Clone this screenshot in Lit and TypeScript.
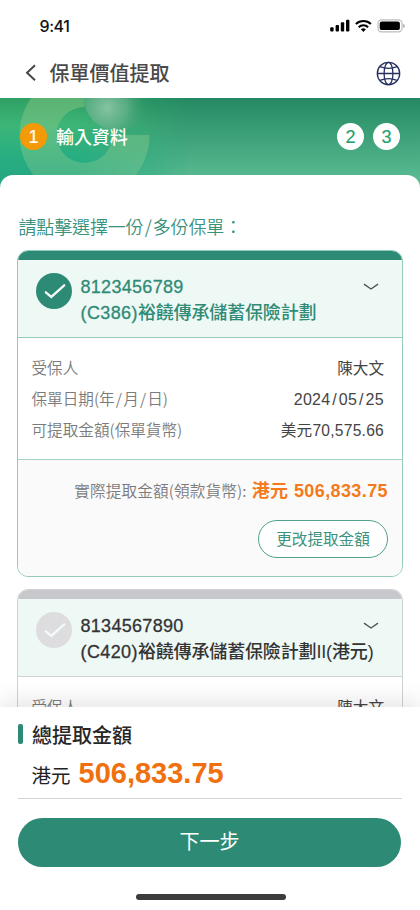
import { LitElement, html, css } from "lit";
import { customElement, property } from "lit/decorators.js";

const base = css`
  :host {
    display: block;
    box-sizing: border-box;
    font-family: "Liberation Sans", "Noto Sans CJK TC", sans-serif;
  }
  *,
  *::before,
  *::after {
    box-sizing: border-box;
  }
  svg {
    display: block;
    flex: none;
  }
`;

@customElement("status-bar")
class StatusBar extends LitElement {
  static styles = [
    base,
    css`
      .bar {
        height: 48px;
        display: flex;
        justify-content: space-between;
        align-items: flex-start;
        padding: 16px 14px 0 39.5px;
      }
      .time {
        font: 500 16px/20px Inter, sans-serif;
        letter-spacing: -0.45px;
        color: #111;
      }
      .icons {
        margin-top: 2px;
      }
    `,
  ];
  render() {
    return html`<div class="bar">
      <span class="time">9:41</span>
      <svg class="icons" width="76" height="18" viewBox="0 0 76 18">
        <g fill="#000">
          <rect x="0.2" y="9.2" width="3.4" height="4.4" rx="1" />
          <rect x="5.6" y="7" width="3.4" height="6.6" rx="1" />
          <rect x="10.8" y="4.3" width="3.4" height="9.3" rx="1" />
          <rect x="16" y="1.8" width="3.4" height="11.8" rx="1" />
          <path d="M33.4 13.9l-2.5-2.6a3.7 3.7 0 0 1 5 0z" />
        </g>
        <g fill="none" stroke="#000" stroke-width="2">
          <path d="M28.7 9.3a6.6 6.6 0 0 1 9.4 0" />
          <path d="M25.9 6a10.8 10.8 0 0 1 15 0" />
        </g>
        <rect x="48" y="1.8" width="24" height="12" rx="3.6" fill="#fff" stroke="#bdbdbd" stroke-width="1.2" />
        <path d="M73.2 6v4c1-.3 1.6-1 1.6-2s-.6-1.7-1.6-2z" fill="#aaa" />
        <rect x="49.7" y="3.5" width="20.2" height="8.6" rx="2.2" fill="#000" />
      </svg>
    </div>`;
  }
}

@customElement("nav-bar")
class NavBar extends LitElement {
  static styles = [
    base,
    css`
      .bar {
        height: 50px;
        display: flex;
        align-items: center;
        padding: 0 19px 0 25px;
      }
      .title {
        margin: 2px auto 0 13.5px;
        font-size: 20px;
        font-weight: 500;
        line-height: 30px;
        color: #4a4a4a;
      }
    `,
  ];
  render() {
    return html`<div class="bar">
      <svg width="11" height="18" viewBox="0 0 11 18" fill="none" stroke="#444" stroke-width="1.9">
        <path d="M10 1.3L2 8.7l8 7.6" />
      </svg>
      <span class="title">保單價值提取</span>
      <svg width="25" height="25" viewBox="0 0 25 25" fill="none" stroke="#26305f" stroke-width="1.3">
        <circle cx="12.5" cy="12.5" r="11.2" />
        <ellipse cx="12.5" cy="12.5" rx="4.4" ry="11.2" />
        <path d="M1.3 12.5h22.4M4 5.7c5 1.9 12 1.9 17 0M4 19.3c5-1.9 12-1.9 17 0" />
      </svg>
    </div>`;
  }
}

@customElement("step-banner")
class StepBanner extends LitElement {
  static styles = [
    base,
    css`
      :host {
        height: 96px;
        position: relative;
        overflow: hidden;
      }
      .art {
        position: absolute;
        inset: 0;
      }
      .steps {
        position: relative;
        display: flex;
        align-items: center;
        height: 77px;
        padding: 0 20px;
        gap: 9px;
      }
      .dot {
        width: 27px;
        height: 27px;
        border-radius: 50%;
        background: #fff;
        color: #24a06d;
        font-size: 18px;
        line-height: 28px;
        text-align: center;
        -webkit-text-stroke: 0.15px;
      }
      .on {
        background: #f59a07;
        color: #fff;
      }
      .label {
        margin-right: auto;
        padding-top: 2px;
        color: #fff;
        font-size: 18px;
        font-weight: 500;
        letter-spacing: -0.1px;
        line-height: 26px;
      }
    `,
  ];
  render() {
    return html`<svg class="art" width="420" height="96" viewBox="0 0 420 96">
        <defs>
          <linearGradient id="base" x1="0" y1="0" x2="0" y2="1">
            <stop offset="0" stop-color="#248963" />
            <stop offset=".8" stop-color="#56b88e" />
            <stop offset="1" stop-color="#5fbf96" />
          </linearGradient>
          <linearGradient id="left" x1="0" y1="0" x2="0" y2="1">
            <stop offset="0" stop-color="#2f9f64" />
            <stop offset=".28" stop-color="#3cb677" />
            <stop offset=".6" stop-color="#28ae81" />
            <stop offset="1" stop-color="#22a383" />
          </linearGradient>
          <linearGradient id="fade" x1="0" y1="0" x2="1" y2="0">
            <stop offset=".4" stop-color="#fff" />
            <stop offset=".65" stop-color="#fff" stop-opacity=".6" />
            <stop offset="1" stop-color="#fff" stop-opacity="0" />
          </linearGradient>
          <mask id="leftmask"><rect width="190" height="96" fill="url(#fade)" /></mask>
          <linearGradient id="ring" x1="0" y1="0" x2="0" y2="1">
            <stop offset="0" stop-color="#8cc47c" stop-opacity=".5" />
            <stop offset=".6" stop-color="#8cc98c" stop-opacity=".42" />
            <stop offset="1" stop-color="#7ccb9a" stop-opacity=".34" />
          </linearGradient>
          <radialGradient id="glow" gradientUnits="userSpaceOnUse" cx="107" cy="10" r="40">
            <stop offset="0" stop-color="#86c3a3" />
            <stop offset=".5" stop-color="#62b189" stop-opacity=".8" />
            <stop offset="1" stop-color="#3a9a70" stop-opacity="0" />
          </radialGradient>
        </defs>
        <rect width="420" height="96" fill="url(#base)" />
        <rect width="190" height="96" fill="url(#left)" mask="url(#leftmask)" />
        <path d="M84.5-28A65 65 0 1 0 149.5 37H112.5A28 28 0 1 1 84.5 9z" fill="url(#ring)" />
        <circle cx="116.5" cy="0" r="32.5" fill="url(#glow)" />
      </svg>
      <div class="steps">
        <span class="dot on">1</span>
        <span class="label">輸入資料</span>
        <span class="dot">2</span>
        <span class="dot">3</span>
      </div>`;
  }
}

@customElement("policy-card")
class PolicyCard extends LitElement {
  @property({ type: Boolean, reflect: true }) selected = false;
  @property() number = "";
  @property() code = "";
  @property() name = "";

  static styles = [
    base,
    css`
      :host {
        --line: #d0d3d3;
        --bar: #c7c8cc;
        --ink: #333;
        --tick: #dddde0;
        border: 1px solid var(--line);
        border-radius: 11px;
        overflow: hidden;
        background: #fff;
      }
      :host([selected]) {
        --line: #94cbbb;
        --bar: #2c8a75;
        --ink: #2f8b75;
        --tick: #2c8a75;
      }
      .bar {
        height: 10px;
        margin: -1px -1px 0;
        background: var(--bar);
      }
      .head {
        display: flex;
        height: 78px;
        padding: 13px 22px 0 17.5px;
        background: #eef8f5;
        border-bottom: 1px solid var(--line);
      }
      .names {
        flex: 1;
        min-width: 0;
        padding: 1px 0 0 9px;
        font-size: 18px;
        font-weight: 500;
        line-height: 26px;
        color: var(--ink);
        white-space: nowrap;
      }
      .number,
      .code {
        -webkit-text-stroke: 0.3px;
      }
      .number {
        letter-spacing: 0.3px;
      }
      .code {
        letter-spacing: 0.4px;
      }
      .name {
        letter-spacing: -0.15px;
      }
      .arrow {
        margin-top: 9px;
      }
    `,
  ];
  render() {
    return html`<div class="bar"></div>
      <div class="head">
        <svg width="36" height="36" viewBox="0 0 36 36" fill="none">
          <circle cx="18" cy="18" r="18" fill="var(--tick)" />
          <path d="M9.8 19.3l5.5 4.6L28.2 12.3" stroke="#f4fbf9" stroke-width="2.3" stroke-linecap="round" />
        </svg>
        <div class="names">
          <div class="number">${this.number}</div>
          <div class="name"><span class="code">${this.code}</span>${this.name}</div>
        </div>
        <svg class="arrow" width="18" height="10" viewBox="0 0 18 10" fill="none" stroke="#4c5755" stroke-width="1.4">
          <path d="M2 2.2l7 4.8 7-4.8" />
        </svg>
      </div>
      <slot></slot>`;
  }
}

@customElement("app-root")
class AppRoot extends LitElement {
  static styles = [
    base,
    css`
      :host {
        width: 420px;
        height: 910px;
        background: #fff;
        display: flex;
        flex-direction: column;
        overflow: hidden;
      }
      .sheet {
        position: relative;
        margin-top: -19px;
        height: 532px;
        flex: none;
        border-radius: 13px 13px 0 0;
        background: #fff;
        padding: 38px 17px 0;
        overflow: hidden;
      }
      .prompt {
        height: 26px;
        margin: 0 0 11px 1.5px;
        font-family: "Noto Sans CJK TC", sans-serif;
        font-size: 18px;
        line-height: 26px;
        font-weight: 350;
        letter-spacing: -0.15px;
        color: #3a917c;
      }
      .slash {
        padding: 0 1.2px;
      }
      policy-card {
        margin-bottom: 12px;
      }
      .rows {
        padding: 14.5px 18px 0 13.5px;
        height: 121px;
        font-size: 15.6px;
        line-height: 31.4px;
      }
      .row {
        display: flex;
        justify-content: space-between;
        height: 31.4px;
        color: #444;
      }
      .key {
        margin-top: -1px;
        color: #7b7b7b;
        font-family: "Noto Sans CJK TC", sans-serif;
        font-weight: 350;
      }
      .date {
        letter-spacing: 0.3px;
        font-size: 16px;
      }
      .date .slash {
        padding: 0 1.8px;
      }
      .usd {
        letter-spacing: 0.25px;
      }
      .foot {
        height: 117px;
        border-top: 1px solid #a5d3c6;
        background: #fafafa;
        padding: 18px 14px 0;
        display: flex;
        flex-direction: column;
        align-items: flex-end;
        gap: 16px;
      }
      .payout {
        display: flex;
        gap: 5px;
        line-height: 26px;
        white-space: nowrap;
      }
      .payout .key {
        font-size: 15.6px;
        letter-spacing: 0.15px;
      }
      .hkd {
        font-size: 18px;
        font-weight: 700;
        color: #f47a1c;
        letter-spacing: 0.4px;
      }
      .change {
        width: 130px;
        height: 38px;
        border: 1px solid #52a18e;
        border-radius: 19px;
        background: #fff;
        color: #3d937e;
        font-size: 15.6px;
        line-height: 38px;
        text-align: center;
      }
      .total {
        position: relative;
        height: 203px;
        flex: none;
        background: #fff;
        box-shadow: 0 -6px 22px rgba(0, 0, 0, 0.1);
        padding: 17px 18px 0;
      }
      .total-title {
        display: flex;
        align-items: center;
        gap: 9.5px;
        height: 20px;
        font-size: 20px;
        font-weight: 500;
        color: #262626;
      }
      .mark {
        width: 4.5px;
        height: 20px;
        border-radius: 2px;
        background: #2c8a75;
      }
      .sum {
        display: flex;
        align-items: baseline;
        gap: 8px;
        height: 54.5px;
        padding-left: 13.5px;
        line-height: 59px;
        border-bottom: 1px solid #d4d4d4;
        font-size: 19.5px;
        color: #222;
      }
      .sum b {
        font-size: 29px;
        color: #f07010;
      }
      .next {
        margin: 19.5px 1px 0 0;
        height: 49px;
        border-radius: 25px;
        background: #2c8a75;
        color: #fff;
        font-size: 20px;
        line-height: 49px;
        text-align: center;
      }
      .home {
        width: 150px;
        height: 6px;
        margin: 27px 0 0 118px;
        border-radius: 3px;
        background: #3c3c3c;
      }
    `,
  ];
  render() {
    const slash = html`<span class="slash">/</span>`;
    return html`
      <status-bar></status-bar>
      <nav-bar></nav-bar>
      <step-banner></step-banner>
      <main class="sheet">
        <p class="prompt">請點擊選擇一份${slash}多份保單：</p>
        <policy-card selected number="8123456789" code="(C386)" name="裕饒傳承儲蓄保險計劃">
          <div class="rows">
            <div class="row"><span class="key">受保人</span><span>陳大文</span></div>
            <div class="row">
              <span class="key">保單日期(年${slash}月${slash}日)</span>
              <span class="date">2024${slash}05${slash}25</span>
            </div>
            <div class="row"><span class="key">可提取金額(保單貨幣)</span><span class="usd">美元70,575.66</span></div>
          </div>
          <div class="foot">
            <div class="payout"><span class="key">實際提取金額(領款貨幣):</span><span class="hkd">港元 506,833.75</span></div>
            <div class="change">更改提取金額</div>
          </div>
        </policy-card>
        <policy-card number="8134567890" code="(C420)" name="裕饒傳承儲蓄保險計劃II(港元)">
          <div class="rows">
            <div class="row"><span class="key">受保人</span><span>陳大文</span></div>
          </div>
        </policy-card>
      </main>
      <footer class="total">
        <div class="total-title"><span class="mark"></span>總提取金額</div>
        <div class="sum"><span>港元</span><b>506,833.75</b></div>
        <div class="next">下一步</div>
        <div class="home"></div>
      </footer>
    `;
  }
}
